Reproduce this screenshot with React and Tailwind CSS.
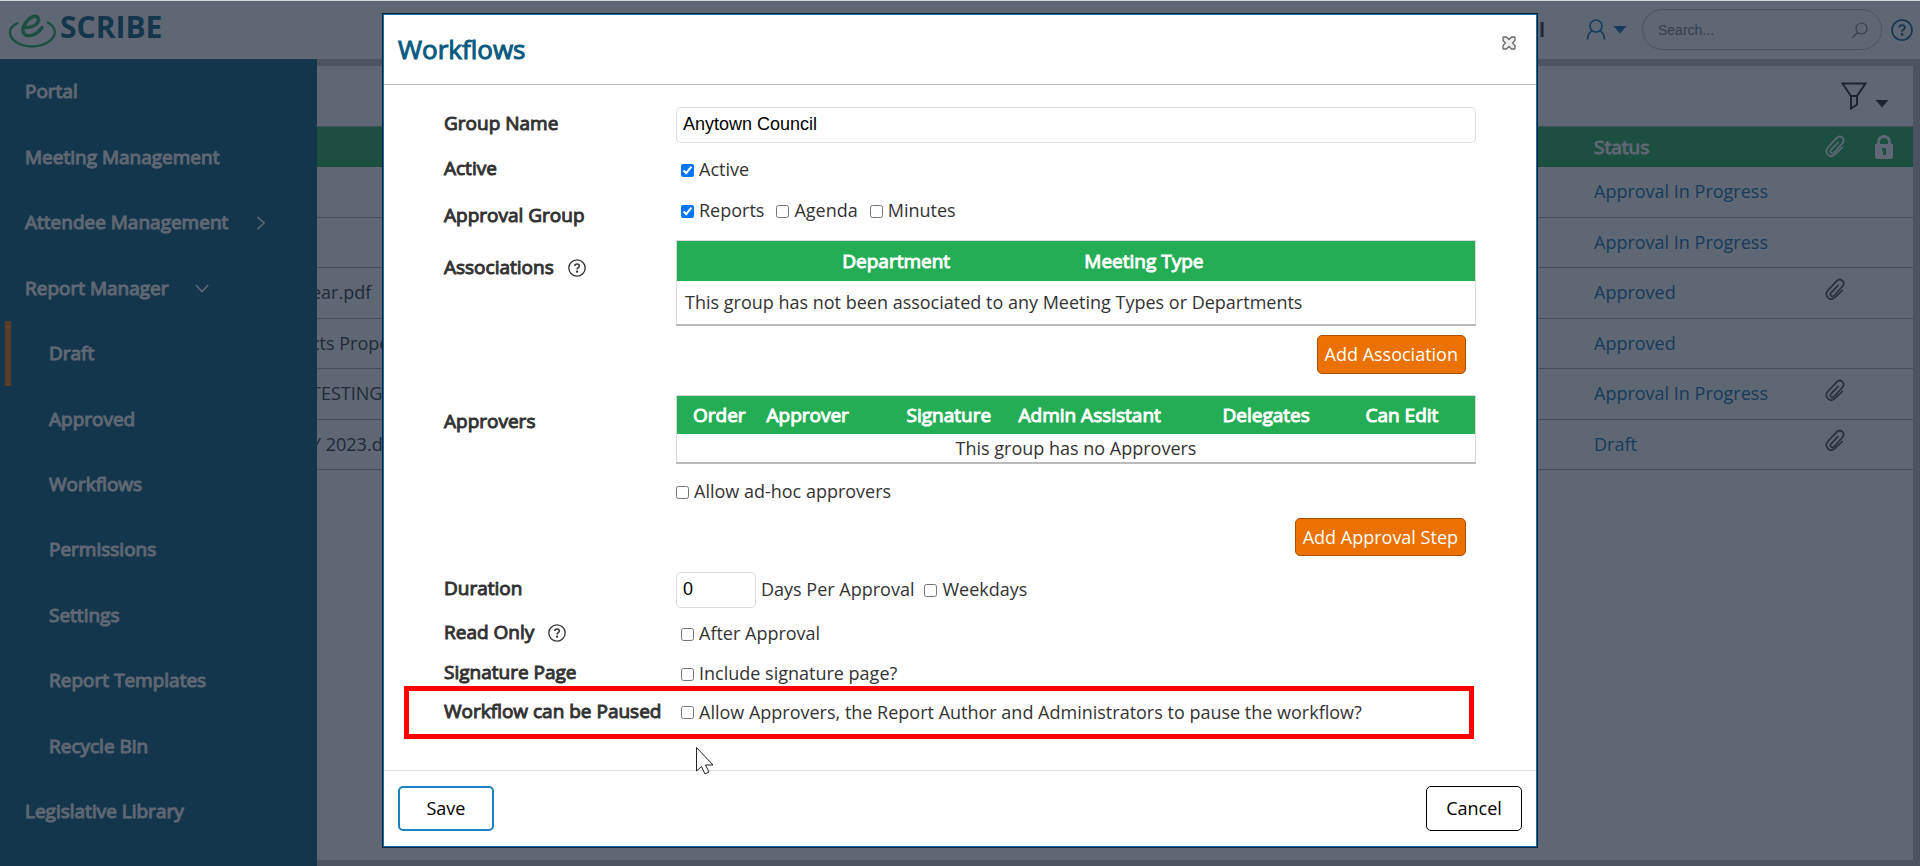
import React from 'react'

const navItems = [
  { label: 'Portal' },
  { label: 'Meeting Management' },
  { label: 'Attendee Management', chevron: 'right' },
  { label: 'Report Manager', chevron: 'down' },
  { label: 'Draft', sub: true, active: true },
  { label: 'Approved', sub: true },
  { label: 'Workflows', sub: true },
  { label: 'Permissions', sub: true },
  { label: 'Settings', sub: true },
  { label: 'Report Templates', sub: true },
  { label: 'Recycle Bin', sub: true },
  { label: 'Legislative Library' }
]

const reports = [
  { file: '', status: 'Approval In Progress' },
  { file: '', status: 'Approval In Progress' },
  { file: 'ear.pdf', status: 'Approved', attachment: true },
  { file: 'cts Proper', status: 'Approved' },
  { file: 'TESTING', status: 'Approval In Progress', attachment: true },
  { file: 'Y 2023.doc', status: 'Draft', attachment: true }
]

// regular weight thickened with a stroke, used for all emphasised text
const strongText = 'text-[19px] font-normal [-webkit-text-stroke:1px_currentColor]'

const Chevron = ({ direction }) => (
  <svg viewBox="0 0 14 14" className="w-[14px] h-[14px]" fill="none" stroke="currentColor" strokeWidth="1.6">
    <path d={direction === 'right' ? 'M3.5 0.8 10 7l-6.5 6.2' : 'M0.8 4 7 10.5 13.2 4'} />
  </svg>
)

const Caret = ({ className }) => (
  <svg viewBox="0 0 14 8" className={className} fill="currentColor">
    <path d="M0.5 0h13L7 7.5z" />
  </svg>
)

const PaperclipIcon = () => (
  <svg viewBox="0 0 20 23" className="w-5 h-[23px]" fill="none" stroke="currentColor" strokeWidth="1.7" strokeLinecap="round">
    <path d="M13 7.500 6 14.800c-2 2.500.9 5 3.200 2.700l7.900-8.700c4-4.700-1.600-9.800-5.800-5.500L3 12.200c-4.400 5 1.500 11.800 6.700 7.500l7.500-7.200" />
  </svg>
)

const HelpIcon = ({ className }) => (
  <svg viewBox="0 0 22 22" className={className} fill="none" stroke="currentColor" strokeWidth="1.6">
    <circle cx="11" cy="11" r="10" />
    <path d="M8.3 8.6c0-3.300 5.500-3.200 5.500-.1 0 2-2.700 2.100-2.700 4.200" strokeWidth="1.8" />
    <circle cx="11.1" cy="15.5" r="0.6" fill="currentColor" />
  </svg>
)

const Logo = () => (
  <div className="flex items-start gap-1 text-[#085a80]">
    <svg viewBox="0 0 48 40" className="w-12 h-10 text-[#23ad54]" fill="none" stroke="currentColor" strokeLinecap="round">
      <path d="M9.5 14C4 17 1.5 21 2 24c.8 7.500 10 13.500 22 13.500S46.500 31 46.800 23.500C47 19.500 44 16 40 13.500" strokeWidth="2.4" />
      <path d="M17 18.500C24 19 31 15 30.500 10.500 30 6 24.500 6.500 20.500 10.500 16 15 13.500 20 15.500 24 18 28.500 28 27.500 34 18.500" strokeWidth="3.4" />
    </svg>
    <span className="text-[30px] leading-9 font-bold">SCRIBE</span>
  </div>
)

const CheckOption = ({ label, defaultChecked }) => (
  <label className="flex items-center gap-[5px]">
    <input type="checkbox" defaultChecked={defaultChecked} className="w-[13px] h-[13px]" />
    <span className="pb-0.5">{label}</span>
  </label>
)

const FieldLabel = ({ children, htmlFor }) => (
  <label htmlFor={htmlFor} className={`flex w-[232px] shrink-0 items-center gap-[14px] pb-0.5 whitespace-nowrap ${strongText}`}>
    {children}
  </label>
)

const Header = () => (
  <header className="flex h-[59px] items-start justify-between border-t border-[#d0d8d8] bg-white pt-2 pl-2">
    <Logo />
    <div className="flex items-center pr-[7px]">
      <span className="text-xl font-bold text-[#333]">al</span>
      <button aria-label="Account" className="ml-[41px] flex items-center gap-[7px] text-[#0a6cb4]">
        <svg viewBox="0 0 20 21" className="w-5 h-[21px]" fill="none" stroke="currentColor" strokeWidth="1.7">
          <circle cx="10" cy="7" r="6" />
          <path d="M1.5 20.5c.2-5 2.2-8 5.800-9M18.500 20.500c-.2-5-2.200-8-5.800-9" />
        </svg>
        <Caret className="w-[14px] h-2" />
      </button>
      <div className="ml-[15px] flex h-[41px] w-60 items-center rounded-full border border-[#bbb] pr-[13px] pl-[15px] text-[#777]">
        <input
          type="search"
          aria-label="Search"
          placeholder="Search..."
          className="min-w-0 flex-1 font-['Liberation_Sans',sans-serif] text-sm placeholder:text-[#777]"
        />
        <svg viewBox="0 0 16 16" className="h-4 w-4" fill="none" stroke="currentColor" strokeWidth="1.2">
          <circle cx="9.5" cy="6.5" r="5.5" />
          <path d="M5.5 10.5 0.5 15.5" />
        </svg>
      </div>
      <button aria-label="Help" className="ml-[9px] text-[#085a80]">
        <HelpIcon className="h-[22px] w-[22px]" />
      </button>
    </div>
  </header>
)

const Sidebar = () => (
  <nav className={`w-[317px] shrink-0 bg-[#085a80] text-white ${strongText}`}>
    <ul className="flex h-[785px] flex-col">
      {navItems.map((item) => (
        <li key={item.label} className="flex flex-1 pl-[5px]">
          <a
            href="#"
            className={`flex flex-1 items-center gap-[26px] border-l-[6px] ${item.active ? 'border-[#f07000]' : 'border-transparent'} ${item.sub ? 'pl-[38px]' : 'pl-[14px]'}`}
          >
            {item.label}
            {item.chevron && <Chevron direction={item.chevron} />}
          </a>
        </li>
      ))}
    </ul>
  </nav>
)

const ReportList = () => (
  <main className="min-w-0 flex-1 border-t-[7px] border-r-[7px] border-b-[6px] border-[#c0c0c0] bg-white">
    <div className="flex h-[60px] items-center justify-end pr-6">
      <button aria-label="Filter" className="flex items-end gap-2 text-[#222]">
        <svg viewBox="0 0 26 28" className="h-7 w-[26px]" fill="none" stroke="currentColor" strokeWidth="2">
          <path d="M1.5 1.5h23L16 14H10z" />
          <path d="M10 14v12.5l6-4V14" />
        </svg>
        <Caret className="mb-[2px] h-2 w-[14px]" />
      </button>
    </div>
    <table className="w-full table-fixed border-t border-[#aaa] text-left text-lg">
      <thead>
        <tr className="h-10 bg-[#23ad54] text-white">
          <th aria-label="File" />
          <th className={`w-[231px] pt-0.5 ${strongText}`}>Status</th>
          <th className="w-[50px]"><PaperclipIcon /></th>
          <th className="w-[38px]">
            <svg viewBox="0 0 18 24" className="h-6 w-[18px]" fill="currentColor">
              <path fillRule="evenodd" d="M0 9h2V7a7 7 0 0 1 14 0v2h2v13a2 2 0 0 1-2 2H2a2 2 0 0 1-2-2zM5 9h8V7a4 4 0 0 0-8 0zM7 13v3h1v4h3v-7z" />
            </svg>
          </th>
        </tr>
      </thead>
      <tbody>
        {reports.map((report, index) => (
          <tr key={index} className="h-[50px] border-b border-[#aaa] odd:h-[51px]">
            <td className="overflow-hidden pb-0.5 -indent-1.5 whitespace-nowrap text-[#333]">{report.file}</td>
            <td className="pb-0.5"><a href="#" className="text-[#0a6cb4]">{report.status}</a></td>
            <td className="pb-2 text-[#444]">{report.attachment && <PaperclipIcon />}</td>
            <td />
          </tr>
        ))}
      </tbody>
    </table>
  </main>
)

const gridClass = 'w-full table-fixed border border-[#d8d8d8] border-b-2 border-b-[#bbb] text-left'
const actionClass = 'rounded-[5px] border border-[#a85000] bg-[#eb7100] px-[7px] text-white'
const inputClass = "rounded-[5px] border border-[#ddd] px-[6px] pb-0.5 font-['Liberation_Sans',sans-serif] text-black"

const WorkflowDialog = () => (
  <div role="dialog" aria-label="Workflows" className="relative w-full max-w-[1156px] border border-[#14202c] bg-white text-lg text-[#333]">
    <div className="border border-[#0a70b8]">
      <div className="flex h-[70px] items-center justify-between border-b border-[#b8b8b8] pr-5 pl-[14px]">
        <h1 className="text-[26px] text-[#085a80] [-webkit-text-stroke:1px_currentColor]">Workflows</h1>
        <button aria-label="Close" className="mb-[14px]">
          <svg viewBox="0 0 14 14" className="h-[14px] w-[14px]" fill="#eee" stroke="#666" strokeWidth="1.3" strokeLinejoin="round">
            <path d="M1.5 1h3L7 3.500 9.500 1h3l.5.5v3L10.500 7 13 9.500v3l-.5.5h-3L7 10.500 4.500 13h-3L1 12.500v-3L3.500 7 1 4.500v-3z" />
          </svg>
        </button>
      </div>

      <form className="flex h-[685px] flex-col px-[60px] pt-[22px]">
        <div className="flex h-9">
          <FieldLabel htmlFor="group-name">Group Name</FieldLabel>
          <input id="group-name" defaultValue="Anytown Council" className={`min-w-0 flex-1 ${inputClass}`} />
        </div>
        <div className="mt-3 flex h-[30px]">
          <FieldLabel>Active</FieldLabel>
          <div className="flex items-center pl-[5px]"><CheckOption label="Active" defaultChecked /></div>
        </div>
        <div className="mt-3 flex h-10">
          <FieldLabel>Approval Group</FieldLabel>
          <div className="mb-3 flex items-center gap-3 pl-[5px]">
            <CheckOption label="Reports" defaultChecked />
            <CheckOption label="Agenda" />
            <CheckOption label="Minutes" />
          </div>
        </div>

        <div className="mt-[3px] flex items-start">
          <FieldLabel>
            <span className="py-[13px]">Associations</span>
            <HelpIcon className="h-[18px] w-[18px]" />
          </FieldLabel>
          <div className="flex min-w-0 flex-1 flex-col">
            <table className={gridClass}>
              <thead>
                <tr className="h-10 bg-[#23ad54] text-center text-white">
                  <th className="w-[12%]" />
                  <th className={`w-[31%] pt-0.5 ${strongText}`}>Department</th>
                  <th className={`w-[31%] pt-0.5 ${strongText}`}>Meeting Type</th>
                  <th />
                </tr>
              </thead>
              <tbody>
                <tr className="h-11">
                  <td colSpan={4} className="px-2">This group has not been associated to any Meeting Types or Departments</td>
                </tr>
              </tbody>
            </table>
            <button type="button" className={`mt-[9px] mr-[10px] h-[39px] self-end ${actionClass}`}>Add Association</button>
          </div>
        </div>

        <div className="mt-[21px] flex items-start">
          <FieldLabel><span className="py-3">Approvers</span></FieldLabel>
          <div className="flex min-w-0 flex-1 flex-col">
            <table className={gridClass}>
              <thead>
                <tr className="h-[39px] bg-[#23ad54] text-white">
                  <th className={`w-[74px] pt-0.5 pl-4 ${strongText}`}>Order</th>
                  <th className={`w-[140px] pt-0.5 pl-4 ${strongText}`}>Approver</th>
                  <th className={`w-[112px] pt-0.5 pl-4 ${strongText}`}>Signature</th>
                  <th className={`w-[204px] pt-0.5 pl-4 ${strongText}`}>Admin Assistant</th>
                  <th className={`w-[143px] pt-0.5 pl-4 ${strongText}`}>Delegates</th>
                  <th className={`pt-0.5 pl-4 ${strongText}`}>Can Edit</th>
                </tr>
              </thead>
              <tbody>
                <tr className="h-7">
                  <td colSpan={6} className="text-center">This group has no Approvers</td>
                </tr>
              </tbody>
            </table>
            <div className="mt-[13px] flex"><CheckOption label="Allow ad-hoc approvers" /></div>
            <button type="button" className={`mt-[11px] mr-[10px] h-[38px] self-end ${actionClass}`}>Add Approval Step</button>
          </div>
        </div>

        <div className="mt-4 flex h-9">
          <FieldLabel htmlFor="duration">Duration</FieldLabel>
          <div className="flex items-center gap-[10px]">
            <div className="flex items-center gap-[5px]">
              <input id="duration" defaultValue="0" className={`h-9 w-20 ${inputClass}`} />
              <span className="pb-0.5">Days Per Approval</span>
            </div>
            <CheckOption label="Weekdays" />
          </div>
        </div>
        <div className="mt-3 flex h-7">
          <FieldLabel>
            Read Only
            <HelpIcon className="h-[18px] w-[18px]" />
          </FieldLabel>
          <div className="flex items-center pl-[5px]"><CheckOption label="After Approval" /></div>
        </div>
        <div className="mt-3 flex h-7">
          <FieldLabel>Signature Page</FieldLabel>
          <div className="flex items-center pl-[5px]"><CheckOption label="Include signature page?" /></div>
        </div>
        <div className="-mt-[2px] mr-0.5 -ml-10 flex h-[53px] items-center border-[5px] border-[#f00] pl-[35px]">
          <FieldLabel>Workflow can be Paused</FieldLabel>
          <div className="flex items-center pl-[5px]">
            <CheckOption label="Allow Approvers, the Report Author and Administrators to pause the workflow?" />
          </div>
        </div>
      </form>

      <div className="flex h-[76px] items-center justify-between border-t border-[#ddd] px-[14px] text-black">
        <button className="h-[45px] w-24 rounded-[5px] border-2 border-[#1c82c0] pb-0.5">Save</button>
        <button className="h-[45px] w-24 rounded-[5px] border border-black pb-0.5">Cancel</button>
      </div>
    </div>

    <svg viewBox="0 0 18 28" className="absolute top-[733px] left-[313px] h-7 w-[18px]" fill="#fff" stroke="#222" strokeWidth="1">
      <path d="M0.5 0.5v23.5l5-4.500 3.500 7.500 4-2-3.500-7h7.500z" />
    </svg>
  </div>
)

const App = () => (
  <div className="relative flex min-h-screen flex-col font-['Open_Sans',sans-serif]">
    <Header />
    <div className="flex flex-1">
      <Sidebar />
      <ReportList />
    </div>
    <div className="absolute inset-x-0 top-px bottom-0 flex items-start justify-center bg-[#192738]/70 pt-3">
      <WorkflowDialog />
    </div>
  </div>
)

export default App
